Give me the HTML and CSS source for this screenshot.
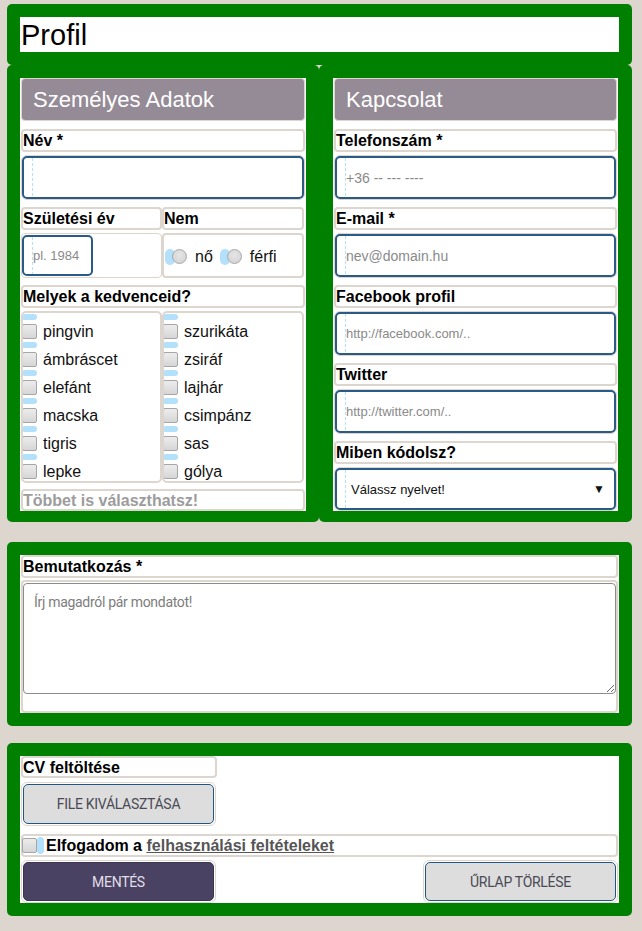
FILE: index.html
```html
<!DOCTYPE html>
<html lang="hu">
<head>
<meta charset="utf-8">
<title>Profil</title>
<link rel="stylesheet" href="styles.css">
</head>
<body>
<div class="page">
  <section class="card card-top">
    <h1 class="title">Profil</h1>
  </section>

  <div class="cols">
    <section class="card card-left">
      <div class="panel">
        <div class="head">Személyes Adatok</div>
        <div class="lbl">Név *</div>
        <div class="wrap"><input class="inp" type="text"></div>
        <div class="pair">
          <div class="lbl">Születési év</div>
          <div class="lbl">Nem</div>
        </div>
        <div class="pair pair-cells">
          <div class="cell"><input class="inp inp-year" type="text" placeholder="pl. 1984"></div>
          <div class="cell cell-radio">
            <span class="pill-v"></span><span class="radio"></span><span class="rtext">nő</span>
            <span class="pill-v"></span><span class="radio"></span><span class="rtext">férfi</span>
          </div>
        </div>
        <div class="lbl">Melyek a kedvenceid?</div>
        <div class="pair pair-lists">
          <div class="list">
            <div class="item"><span class="pill"></span><div class="row"><span class="cb"></span><span>pingvin</span></div></div>
            <div class="item"><span class="pill"></span><div class="row"><span class="cb"></span><span>ámbráscet</span></div></div>
            <div class="item"><span class="pill"></span><div class="row"><span class="cb"></span><span>elefánt</span></div></div>
            <div class="item"><span class="pill"></span><div class="row"><span class="cb"></span><span>macska</span></div></div>
            <div class="item"><span class="pill"></span><div class="row"><span class="cb"></span><span>tigris</span></div></div>
            <div class="item"><span class="pill"></span><div class="row"><span class="cb"></span><span>lepke</span></div></div>
            <div class="item"><span class="pill"></span></div>
          </div>
          <div class="list">
            <div class="item"><span class="pill"></span><div class="row"><span class="cb"></span><span>szurikáta</span></div></div>
            <div class="item"><span class="pill"></span><div class="row"><span class="cb"></span><span>zsiráf</span></div></div>
            <div class="item"><span class="pill"></span><div class="row"><span class="cb"></span><span>lajhár</span></div></div>
            <div class="item"><span class="pill"></span><div class="row"><span class="cb"></span><span>csimpánz</span></div></div>
            <div class="item"><span class="pill"></span><div class="row"><span class="cb"></span><span>sas</span></div></div>
            <div class="item"><span class="pill"></span><div class="row"><span class="cb"></span><span>gólya</span></div></div>
            <div class="item"><span class="pill"></span></div>
          </div>
        </div>
        <div class="lbl hint">Többet is választhatsz!</div>
      </div>
    </section>

    <section class="card card-right">
      <div class="panel">
        <div class="head">Kapcsolat</div>
        <div class="lbl">Telefonszám *</div>
        <div class="wrap"><input class="inp" type="text" placeholder="+36 -- --- ----"></div>
        <div class="lbl">E-mail *</div>
        <div class="wrap"><input class="inp" type="text" placeholder="nev@domain.hu"></div>
        <div class="lbl">Facebook profil</div>
        <div class="wrap"><input class="inp inp-sm" type="text" placeholder="http://facebook.com/.."></div>
        <div class="lbl">Twitter</div>
        <div class="wrap"><input class="inp inp-sm" type="text" placeholder="http://twitter.com/.."></div>
        <div class="lbl">Miben kódolsz?</div>
        <div class="wrap wrap-last">
          <div class="inp select"><span>Válassz nyelvet!</span><span class="arrow">▼</span></div>
        </div>
      </div>
    </section>
  </div>

  <section class="card card-intro">
    <div class="panel">
      <div class="lbl">Bemutatkozás *</div>
      <div class="tawrap"><textarea class="ta" placeholder="Írj magadról pár mondatot!"></textarea></div>
    </div>
  </section>

  <section class="card card-cv">
    <div class="panel">
      <div class="lbl lbl-short">CV feltöltése</div>
      <div class="btnwrap"><button class="btn" type="button">File kiválasztása</button></div>
      <div class="lbl accept"><span class="cb cb-accept"></span><span class="pill-v pill-accept"></span>Elfogadom a&nbsp;<a class="link" href="#">felhasználási feltételeket</a></div>
      <div class="actions">
        <div class="btnwrap"><button class="btn btn-save" type="button">Mentés</button></div>
        <div class="btnwrap"><button class="btn" type="button">Űrlap törlése</button></div>
      </div>
    </div>
  </section>
</div>
</body>
</html>
```

FILE: styles.css
```css
* { box-sizing: border-box; }

body {
  margin: 0;
  background: #ddd6ce;
  font-family: "Liberation Sans", Arial, sans-serif;
  color: #000;
}

.page {
  padding: 4px 10px 0 7px;
}

.card {
  background: #008000;
  border-radius: 5px;
  padding: 13px;
}

.title {
  margin: 0;
  background: #fff;
  height: 35px;
  font-size: 29px;
  font-weight: normal;
  line-height: 36px;
  padding-left: 1px;
}

.cols {
  display: grid;
  grid-template-columns: 312px 313px;
}

.card-left { padding: 13px 13px 11px 13px; }
.card-right { padding: 13px 14px 11px 14px; }

.panel {
  background: #fff;
  display: flex;
  flex-direction: column;
}

.head {
  height: 43px;
  margin: 0 1px 8px;
  background: #958b96;
  border: 1px solid #ddd6ce;
  border-radius: 4px;
  color: #fff;
  font-size: 22px;
  line-height: 41px;
  padding-left: 11px;
}

.lbl {
  height: 23px;
  margin: 0 1px 3px;
  border: 2px solid #ddd6ce;
  border-radius: 4px;
  font-weight: bold;
  font-size: 16px;
  line-height: 19px;
  padding-left: 0;
  background: #fff;
}

.hint {
  color: #9c9c9c;
  margin-top: 6px;
  margin-bottom: 0;
  height: 22px;
}

.wrap {
  height: 45px;
  margin: 0 1px 7px;
  border: 1px solid #ddd6ce;
  border-radius: 6px;
  display: flex;
}

.wrap-last {
  height: 44px;
  margin-bottom: 0;
}

.inp {
  width: 100%;
  height: 100%;
  border: 2px solid #2a5b86;
  border-radius: 5px;
  background-color: #fff;
  background-image: repeating-linear-gradient(to bottom, #b3e0fb 0 3px, transparent 3px 5px);
  background-size: 1px 100%;
  background-position: 8px 0;
  background-repeat: no-repeat;
  padding: 0 0 0 9px;
  font-family: "Liberation Sans", Arial, sans-serif;
  font-size: 14px;
  color: #333;
  outline: none;
}

.inp::placeholder { color: #8a8a8a; }
.inp-sm { font-size: 13px; }

.select {
  display: flex;
  align-items: center;
  justify-content: space-between;
  padding: 0 9px 0 14px;
  font-size: 13px;
  color: #111;
}

.arrow { font-size: 12px; }

.pair {
  display: grid;
  grid-template-columns: 141px 142px;
  margin: 0 1px;
}

.pair .lbl { margin: 0; }
.pair { margin-bottom: 3px; }

.pair-cells {
  height: 45px;
  margin-bottom: 7px;
}

.cell {
  border: 1px solid #ddd6ce;
  border-radius: 4px;
  display: flex;
  padding: 1px 0 0 0;
}

.inp-year {
  width: 71px;
  height: 41px;
  font-size: 13px;
  padding-left: 9px;
}

.cell-radio {
  align-items: center;
  padding: 2px 0 0 1px;
  border-width: 2px;
}

.pill-v {
  display: inline-block;
  width: 10px;
  height: 16px;
  border-radius: 5px;
  background: #b3e0fb;
}

.radio {
  display: inline-block;
  width: 15px;
  height: 15px;
  margin-left: -3px;
  border-radius: 50%;
  background: radial-gradient(circle at 50% 40%, #e6e6e6, #cfcfcf);
  border: 1px solid #a9a9a9;
}

.rtext {
  font-size: 16px;
  margin: 0 7px 0 8px;
  color: #111;
}

.pair-lists {
  height: 172px;
  margin-bottom: 0;
}

.list {
  border: 2px solid #ddd6ce;
  border-radius: 5px;
  overflow: hidden;
  padding-top: 1px;
}

.item {
  height: 28px;
  display: flex;
  flex-direction: column;
  margin-left: -1px;
}

.pill {
  width: 15px;
  height: 6px;
  border-radius: 3px;
  background: #b3e0fb;
  flex: none;
}

.row {
  display: flex;
  align-items: center;
  margin-top: 3px;
  font-size: 16px;
  color: #111;
  height: 17px;
}

.cb {
  display: inline-block;
  width: 15px;
  height: 15px;
  margin-right: 6px;
  border: 1px solid #a6a6a6;
  border-radius: 2px;
  background: linear-gradient(#ececec, #d6d6d6);
  flex: none;
}

.tawrap {
  margin: -1px 1px 0;
  border: 2px solid #ddd6ce;
  border-radius: 4px;
  padding: 1px 0 17px;
  display: flex;
}

.ta {
  width: 100%;
  height: 111px;
  border: 1px solid #8c8c8c;
  border-radius: 4px;
  resize: vertical;
  padding: 10px 10px;
  font-family: Roboto, "Liberation Sans", sans-serif;
  font-size: 14px;
  letter-spacing: -0.3px;
  outline: none;
}

.ta::placeholder { color: #7d7d7d; }

.card-intro { margin-top: 20px; }
.card-cv { margin-top: 17px; }

.lbl-short {
  width: 196px;
  height: 22px;
  margin-bottom: 4px;
}

.btnwrap {
  width: 195px;
  height: 44px;
  margin: 0 1px 8px;
  border: 1px solid #ddd6ce;
  border-radius: 6px;
  padding: 1px;
  display: flex;
}

.btn {
  width: 100%;
  height: 100%;
  border: 1px solid #1f5683;
  border-radius: 5px;
  background: #dddddd;
  color: #4a4a55;
  font-family: Roboto, "Liberation Sans", sans-serif;
  font-size: 14px;
  text-transform: uppercase;
  letter-spacing: -0.3px;
  padding: 0;
}

.btn-save {
  background: #4a4262;
  color: #e0dde6;
  border-color: #3c3550;
}

.accept {
  display: flex;
  align-items: center;
  margin-bottom: 3px;
  padding-left: 0;
}

.cb-accept {
  margin: 0 0 0 -1px;
}

.pill-accept {
  width: 7px;
  height: 17px;
  border-radius: 4px;
  margin-right: 2px;
}

.link {
  color: #555;
  text-decoration: underline;
}

.actions {
  display: flex;
  justify-content: space-between;
  height: 43px;
}

.actions .btnwrap {
  margin-bottom: 0;
  height: 43px;
}
```
